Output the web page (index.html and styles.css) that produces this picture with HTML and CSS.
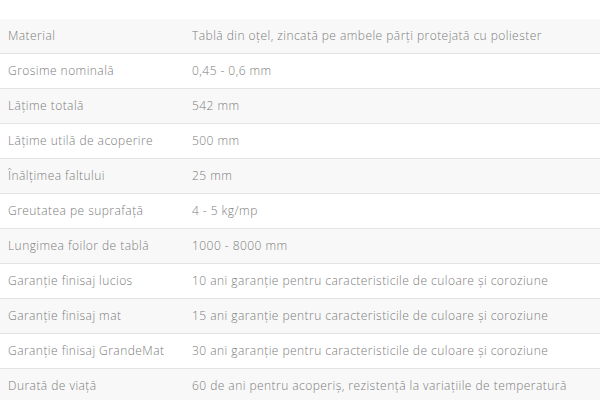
FILE: index.html
```html
<!DOCTYPE html>
<html lang="ro">
<head>
<meta charset="utf-8">
<link rel="stylesheet" href="styles.css">
</head>
<body>
<table class="specs">
<tbody>
<tr><td class="k">Material</td><td>Tablă din oțel, zincată pe ambele părți protejată cu poliester</td></tr>
<tr><td class="k">Grosime nominală</td><td>0,45 - 0,6 mm</td></tr>
<tr><td class="k">Lățime totală</td><td>542 mm</td></tr>
<tr><td class="k">Lățime utilă de acoperire</td><td>500 mm</td></tr>
<tr><td class="k">Înălțimea faltului</td><td>25 mm</td></tr>
<tr><td class="k">Greutatea pe suprafață</td><td>4 - 5 kg/mp</td></tr>
<tr><td class="k">Lungimea foilor de tablă</td><td>1000 - 8000 mm</td></tr>
<tr><td class="k">Garanție finisaj lucios</td><td>10 ani garanție pentru caracteristicile de culoare și coroziune</td></tr>
<tr><td class="k">Garanție finisaj mat</td><td>15 ani garanție pentru caracteristicile de culoare și coroziune</td></tr>
<tr><td class="k">Garanție finisaj GrandeMat</td><td>30 ani garanție pentru caracteristicile de culoare și coroziune</td></tr>
<tr><td class="k">Durată de viață</td><td>60 de ani pentru acoperiș, rezistență la variațiile de temperatură</td></tr>
</tbody>
</table>
</body>
</html>
```
FILE: styles.css
```css
html, body {
  margin: 0;
  padding: 0;
  background: #fff;
}
body {
  padding-top: 19px;
  font-family: "Open Sans", "Liberation Sans", sans-serif;
  font-weight: 300;
  font-size: 12px;
  letter-spacing: 0.45px;
  color: #7c7c7c;
}
.specs {
  width: 100%;
  border-collapse: collapse;
}
.specs td {
  height: 34px;
  padding: 0 8px;
  border-bottom: 1px solid #e4e4e4;
  vertical-align: middle;
  white-space: nowrap;
  line-height: 1;
}
.specs td.k {
  width: 168px;
}
.specs tr:nth-child(odd) td {
  background: #f8f8f8;
}
```
